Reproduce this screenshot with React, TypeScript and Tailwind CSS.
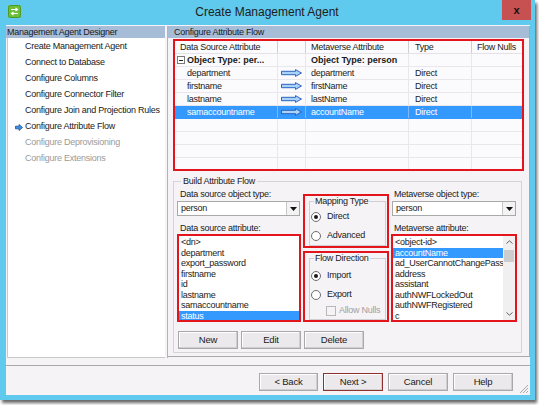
import React from "react";

const steps = [
  { label: "Create Management Agent" },
  { label: "Connect to Database" },
  { label: "Configure Columns" },
  { label: "Configure Connector Filter" },
  { label: "Configure Join and Projection Rules" },
  { label: "Configure Attribute Flow", current: true },
  { label: "Configure Deprovisioning", disabled: true },
  { label: "Configure Extensions", disabled: true },
];

const mappings = [
  { src: "department", mv: "department", type: "Direct" },
  { src: "firstname", mv: "firstName", type: "Direct" },
  { src: "lastname", mv: "lastName", type: "Direct" },
  { src: "samaccountname", mv: "accountName", type: "Direct", selected: true },
];

const sourceAttrs = ["<dn>", "department", "export_password", "firstname", "id", "lastname", "samaccountname", "status"];
const mvAttrs = [
  "<object-id>",
  "accountName",
  "ad_UserCannotChangePassword",
  "address",
  "assistant",
  "authNWFLockedOut",
  "authNWFRegistered",
  "c",
  "carLicense",
];

function AppIcon() {
  return (
    <svg width="13" height="13" viewBox="0 0 13 13">
      <rect x="0" y="0" width="13" height="13" rx="2" fill="#6cbf3a" />
      <rect x="0.5" y="0.5" width="12" height="12" rx="2" fill="none" stroke="#4e9a22" />
      <path d="M3 4.5H9M7.5 3L9.5 4.5L7.5 6" stroke="#fff" strokeWidth="1.2" fill="none" />
      <path d="M10 8.5H4M5.5 7L3.5 8.5L5.5 10" stroke="#fff" strokeWidth="1.2" fill="none" />
    </svg>
  );
}

function StepArrow() {
  return (
    <svg width="8" height="7" viewBox="0 0 8 7">
      <path d="M0.5 2.2H4V0.5L7.5 3.5L4 6.5V4.8H0.5Z" fill="#3a8ee6" stroke="#1d4f9a" strokeWidth="0.8" />
    </svg>
  );
}

function FlowArrow() {
  return (
    <svg width="21" height="8" viewBox="0 0 21 8">
      <path d="M0.5 2.3H14.5V0.6L20.5 4L14.5 7.4V5.7H0.5Z" fill="#a9d2fb" stroke="#1e57b5" strokeWidth="0.9" />
    </svg>
  );
}

function Radio({ checked }: { checked?: boolean }) {
  return (
    <span className="w-[10px] h-[10px] rounded-full border border-[#6e6e6e] bg-white flex items-center justify-center shrink-0">
      {checked && <span className="w-[4px] h-[4px] rounded-full bg-[#1a1a1a]" />}
    </span>
  );
}

function Combo({ value }: { value: string }) {
  return (
    <div className="h-[15px] bg-white border border-[#a9a9a9] flex">
      <span className="flex-1 pl-[3px] leading-[13px]">{value}</span>
      <span className="w-[13px] border-l border-[#c8c8c8] bg-[#f3f3f3] flex items-center justify-center">
        <svg width="7" height="4" viewBox="0 0 7 4">
          <path d="M0 0H7L3.5 4Z" fill="#111" />
        </svg>
      </span>
    </div>
  );
}

function Btn({ label, className }: { label: string; className: string }) {
  return (
    <button
      className={
        "h-[18px] bg-[#ebe9ec] border text-[9.5px] tracking-[-0.2px] leading-none text-[#1a1a1a] shadow-[inset_-1px_-1px_0_#cfcfcf,inset_1px_1px_0_#ffffff] " +
        className
      }
    >
      {label}
    </button>
  );
}

export default function App() {
  return (
    <div className="w-[539px] h-[405px] bg-white overflow-hidden font-['Liberation_Sans',Arial,sans-serif] text-[9px] tracking-[-0.25px] text-[#1a1a1a]">
      <div className="w-[535px] h-[400px] bg-[#5fc9ee] flex flex-col shadow-[2px_3px_3px_rgba(0,0,0,0.6)]">
        {/* Title bar */}
        <div className="h-[25px] flex shrink-0">
          <div className="ml-[8px] mt-[5px]">
            <AppIcon />
          </div>
          <div className="flex-1 pl-[11px] text-center text-[12px] tracking-normal leading-[25px] text-[#202020]">
            Create Management Agent
          </div>
          <div className="w-[29px] h-[20px] mr-[4px] bg-[#c75050] flex items-center justify-center text-[11px] font-bold text-[#111] leading-none tracking-normal">
            x
          </div>
        </div>

        {/* Body */}
        <div className="ml-[6px] mr-[5px] h-[370px] bg-[#f5f3f6] flex flex-col relative">
          {/* Main row */}
          <div className="h-[333px] flex pt-[1px]">
            {/* Left: steps */}
            <div className="w-[159px] flex flex-col">
              <div className="h-[12px] bg-[#a7bcd7] pl-[1px] leading-[12px]">Management Agent Designer</div>
              <div className="flex-1 bg-white border-l border-b border-[#c9c9c9] ml-[1px] pt-[1px]">
                {steps.map((s) => (
                  <div key={s.label} className="h-[16px] flex items-center">
                    <span className="w-[17px] flex justify-end pr-[2px]">{s.current && <StepArrow />}</span>
                    <span className={s.disabled ? "text-[#9a9a9a]" : ""}>{s.label}</span>
                  </div>
                ))}
              </div>
            </div>

            {/* Splitter */}
            <div className="w-[3px] border-r border-[#b4b4b4]" />

            {/* Right: attribute flow */}
            <div className="flex-1 flex flex-col border-r border-b border-[#a9a9a9] mb-[1px]">
              <div className="h-[12px] bg-[#a7bcd7] pl-[6px] leading-[12px]">Configure Attribute Flow</div>
              <div className="flex-1 pl-[5px] pr-[5px] pt-[1px] flex flex-col">
                {/* Grid */}
                <div className="h-[132px] border-2 border-[#e3141c] bg-[#fbfafc] overflow-hidden">
                  <div className="h-[13px] flex leading-[13px] border-b border-[#e4e2e6]">
                    <div className="w-[103px] pl-[5px] border-r border-[#cfcfcf]">Data Source Attribute</div>
                    <div className="w-[28px] border-r border-[#cfcfcf]" />
                    <div className="w-[103px] pl-[5px] border-r border-[#cfcfcf]">Metaverse Attribute</div>
                    <div className="w-[63px] pl-[6px] border-r border-[#cfcfcf]">Type</div>
                    <div className="flex-1 pl-[5px]">Flow Nulls</div>
                  </div>
                  <div className="h-[13px] flex leading-[13px] border-b border-[#e9e7eb] font-bold tracking-normal">
                    <div className="w-[103px] pl-[2px] flex items-center border-r border-[#e9e7eb]">
                      <span className="w-[8px] h-[8px] border border-[#7a7a7a] bg-white flex items-center justify-center mr-[2px]">
                        <span className="w-[4px] h-[1px] bg-[#222]" />
                      </span>
                      Object Type: per...
                    </div>
                    <div className="w-[28px] border-r border-[#e9e7eb]" />
                    <div className="w-[103px] pl-[5px] border-r border-[#e9e7eb]">Object Type: person</div>
                    <div className="w-[63px] border-r border-[#e9e7eb]" />
                    <div className="flex-1" />
                  </div>
                  {mappings.map((m) => (
                    <div
                      key={m.src}
                      className={
                        "h-[13px] flex leading-[13px] border-b " +
                        (m.selected ? "bg-[#3399ff] text-white border-[#3399ff]" : "border-[#e9e7eb]")
                      }
                    >
                      <div className={"w-[103px] pl-[12px] border-r " + (m.selected ? "border-[#7ab8ff]" : "border-[#e9e7eb]")}>{m.src}</div>
                      <div className={"w-[28px] flex items-center justify-center border-r " + (m.selected ? "border-[#7ab8ff]" : "border-[#e9e7eb]")}>
                        <FlowArrow />
                      </div>
                      <div className={"w-[103px] pl-[5px] border-r " + (m.selected ? "border-[#7ab8ff]" : "border-[#e9e7eb]")}>{m.mv}</div>
                      <div className={"w-[63px] pl-[6px] border-r " + (m.selected ? "border-[#7ab8ff]" : "border-[#e9e7eb]")}>{m.type}</div>
                      <div className="flex-1" />
                    </div>
                  ))}
                  {[0, 1, 2, 3].map((i) => (
                    <div key={i} className="h-[13px] flex border-b border-[#e9e7eb]">
                      <div className="w-[103px] border-r border-[#e9e7eb]" />
                      <div className="w-[28px] border-r border-[#e9e7eb]" />
                      <div className="w-[103px] border-r border-[#e9e7eb]" />
                      <div className="w-[63px] border-r border-[#e9e7eb]" />
                      <div className="flex-1" />
                    </div>
                  ))}
                </div>

                {/* Build Attribute Flow */}
                <fieldset className="mt-[5px] mr-[2px] border border-[#d6d4d8] px-[3px] pb-[3px]">
                  <legend className="ml-[4px] px-[2px] leading-[11px]">Build Attribute Flow</legend>
                  <div className="flex gap-[2px]">
                    {/* Source column */}
                    <div className="w-[124px] flex flex-col">
                      <div className="mt-[2px] h-[11px] leading-[11px] pl-[3px]">Data source object type:</div>
                      <div className="mt-[1px] mr-[1px]">
                        <Combo value="person" />
                      </div>
                      <div className="mt-[7px] h-[11px] leading-[11px] pl-[3px]">Data source attribute:</div>
                      <div className="h-[88px] border-2 border-[#e3141c] bg-white overflow-hidden pt-[1px]">
                        {sourceAttrs.map((a) => (
                          <div
                            key={a}
                            className={"h-[10.5px] leading-[10.5px] pl-[2px] " + (a === "status" ? "bg-[#3399ff] text-white" : "")}
                          >
                            {a}
                          </div>
                        ))}
                      </div>
                    </div>

                    {/* Middle column */}
                    <div className="w-[86px] flex flex-col">
                      <div className="mt-[7px] h-[54px] border-2 border-[#e3141c] pl-[4px] pr-[1px]">
                        <fieldset className="h-[50px] border border-[#d0ced2] pl-[1px]">
                          <legend className="ml-[3px] px-[1px] leading-[11px]">Mapping Type</legend>
                          <div className="mt-[4px] h-[12px] flex items-center gap-[6px]">
                            <Radio checked />
                            <span>Direct</span>
                          </div>
                          <div className="mt-[7px] h-[12px] flex items-center gap-[6px]">
                            <Radio />
                            <span>Advanced</span>
                          </div>
                        </fieldset>
                      </div>
                      <div className="mt-[3px] h-[71px] border-2 border-[#e3141c] pl-[4px] pr-[1px]">
                        <fieldset className="h-[67px] border border-[#d0ced2] pl-[1px]">
                          <legend className="ml-[3px] px-[1px] leading-[11px]">Flow Direction</legend>
                          <div className="mt-[6px] h-[12px] flex items-center gap-[6px]">
                            <Radio checked />
                            <span>Import</span>
                          </div>
                          <div className="mt-[7px] h-[12px] flex items-center gap-[6px]">
                            <Radio />
                            <span>Export</span>
                          </div>
                          <div className="mt-[4px] h-[12px] flex items-center gap-[3px] pl-[15px] text-[#a0a0a0]">
                            <span className="w-[10px] h-[10px] border border-[#b9b9b9] bg-[#f4f4f4]" />
                            <span>Allow Nulls</span>
                          </div>
                        </fieldset>
                      </div>
                    </div>

                    {/* Metaverse column */}
                    <div className="w-[126px] flex flex-col">
                      <div className="mt-[2px] h-[11px] leading-[11px] pl-[3px]">Metaverse object type:</div>
                      <div className="mt-[1px] ml-[1px] mr-[1px]">
                        <Combo value="person" />
                      </div>
                      <div className="mt-[7px] h-[11px] leading-[11px] pl-[3px]">Metaverse attribute:</div>
                      <div className="h-[88px] border-2 border-[#e3141c] bg-white flex overflow-hidden">
                        <div className="flex-1 min-w-0 pt-[1px] overflow-hidden">
                          {mvAttrs.map((a) => (
                            <div
                              key={a}
                              className={
                                "h-[10.5px] leading-[10.5px] pl-[2px] whitespace-nowrap " +
                                (a === "accountName" ? "bg-[#3399ff] text-white" : "")
                              }
                            >
                              {a}
                            </div>
                          ))}
                        </div>
                        <div className="w-[12px] bg-[#f0f0f0] flex flex-col">
                          <div className="h-[12px] flex items-center justify-center">
                            <svg width="7" height="4" viewBox="0 0 7 4">
                              <path d="M0.5 3.5L3.5 0.8L6.5 3.5" stroke="#606060" strokeWidth="1" fill="none" />
                            </svg>
                          </div>
                          <div className="mt-[2px] h-[12px] mx-[1px] bg-[#cdcdcd]" />
                          <div className="flex-1" />
                          <div className="h-[12px] flex items-center justify-center">
                            <svg width="7" height="4" viewBox="0 0 7 4">
                              <path d="M0.5 0.5L3.5 3.2L6.5 0.5" stroke="#606060" strokeWidth="1" fill="none" />
                            </svg>
                          </div>
                        </div>
                      </div>
                    </div>
                  </div>

                  <div className="mt-[9px] flex gap-[3px] pl-[1px]">
                    <Btn label="New" className="w-[60px] border-[#a9a9a9]" />
                    <Btn label="Edit" className="w-[60px] border-[#a9a9a9]" />
                    <Btn label="Delete" className="w-[60px] border-[#a9a9a9]" />
                  </div>
                </fieldset>
              </div>
            </div>
          </div>

          {/* Separator */}
          <div className="h-[8px] border-b border-[#a9a9a9]" />

          {/* Bottom bar */}
          <div className="flex-1 flex justify-end items-start pt-[7px] pr-[17px] gap-[5px]">
            <Btn label="<  Back" className="w-[59px] border-[#a9a9a9]" />
            <Btn label="Next  >" className="w-[60px] border-[#8f2f2f]" />
            <Btn label="Cancel" className="w-[60px] border-[#a9a9a9]" />
            <Btn label="Help" className="w-[60px] border-[#a9a9a9]" />
          </div>

          {/* Size grip */}
          <svg className="absolute right-[1px] bottom-[1px]" width="11" height="11" viewBox="0 0 11 11">
            <path d="M10 2L2 10M10 5L5 10M10 8L8 10" stroke="#a8a8a8" strokeWidth="1" />
          </svg>
        </div>
      </div>
    </div>
  );
}
